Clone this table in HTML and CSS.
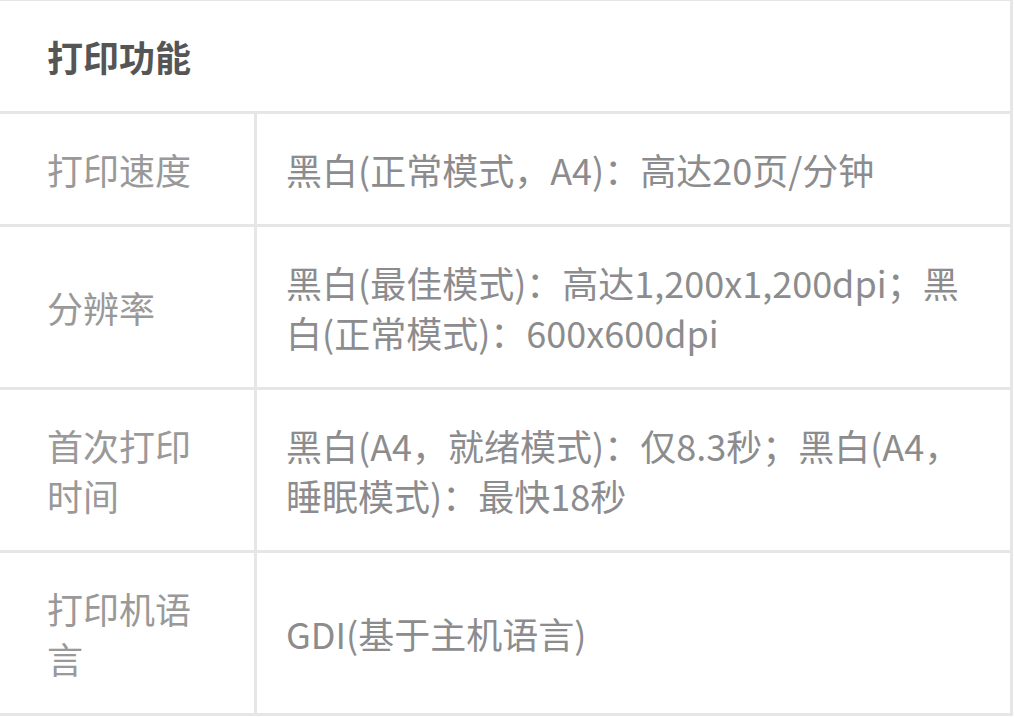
FILE: index.html
```html
<!DOCTYPE html>
<html lang="zh-CN">
<head>
<meta charset="utf-8">
<title>打印功能</title>
<link rel="stylesheet" href="styles.css">
</head>
<body>
<div class="spec">
  <div class="spec-head">打印功能</div>
  <div class="spec-row">
    <div class="spec-label">打印速度</div>
    <div class="spec-value">黑白(正常模式，A4)：高达20页/分钟</div>
  </div>
  <div class="spec-row">
    <div class="spec-label">分辨率</div>
    <div class="spec-value">黑白(最佳模式)：高达1,200x1,200dpi；黑白(正常模式)：600x600dpi</div>
  </div>
  <div class="spec-row">
    <div class="spec-label">首次打印时间</div>
    <div class="spec-value">黑白(A4，就绪模式)：仅8.3秒；黑白(A4，睡眠模式)：最快18秒</div>
  </div>
  <div class="spec-row spec-row-last">
    <div class="spec-label">打印机语言</div>
    <div class="spec-value">GDI(基于主机语言)</div>
  </div>
</div>
</body>
</html>
```

FILE: styles.css
```css
html, body {
  margin: 0;
  padding: 0;
  background: #ffffff;
  overflow: hidden;
}

body {
  font-family: "Noto Sans CJK SC", "Noto Sans", sans-serif;
  font-size: 36px;
  line-height: 50px;
}

.spec {
  box-sizing: border-box;
  width: 1016px;
  margin: -2px 0 0 -3px;
  border: 3px solid #e6e6e6;
  background: #ffffff;
}

.spec-head {
  height: 110px;
  display: flex;
  align-items: center;
  padding-left: 47px;
  font-weight: 700;
  color: #555555;
  border-bottom: 3px solid #e6e6e6;
}

.spec-row {
  display: grid;
  grid-template-columns: 257px 1fr;
  border-bottom: 3px solid #e6e6e6;
}

.spec-row-last {
  border-bottom: none;
}

.spec-label {
  display: flex;
  align-items: center;
  padding: 30px 30px 30px 47px;
  color: #999999;
  border-right: 3px solid #e6e6e6;
}

.spec-value {
  display: flex;
  align-items: center;
  padding: 30px 30px 30px 29px;
  color: #8c8c8e;
}
```
